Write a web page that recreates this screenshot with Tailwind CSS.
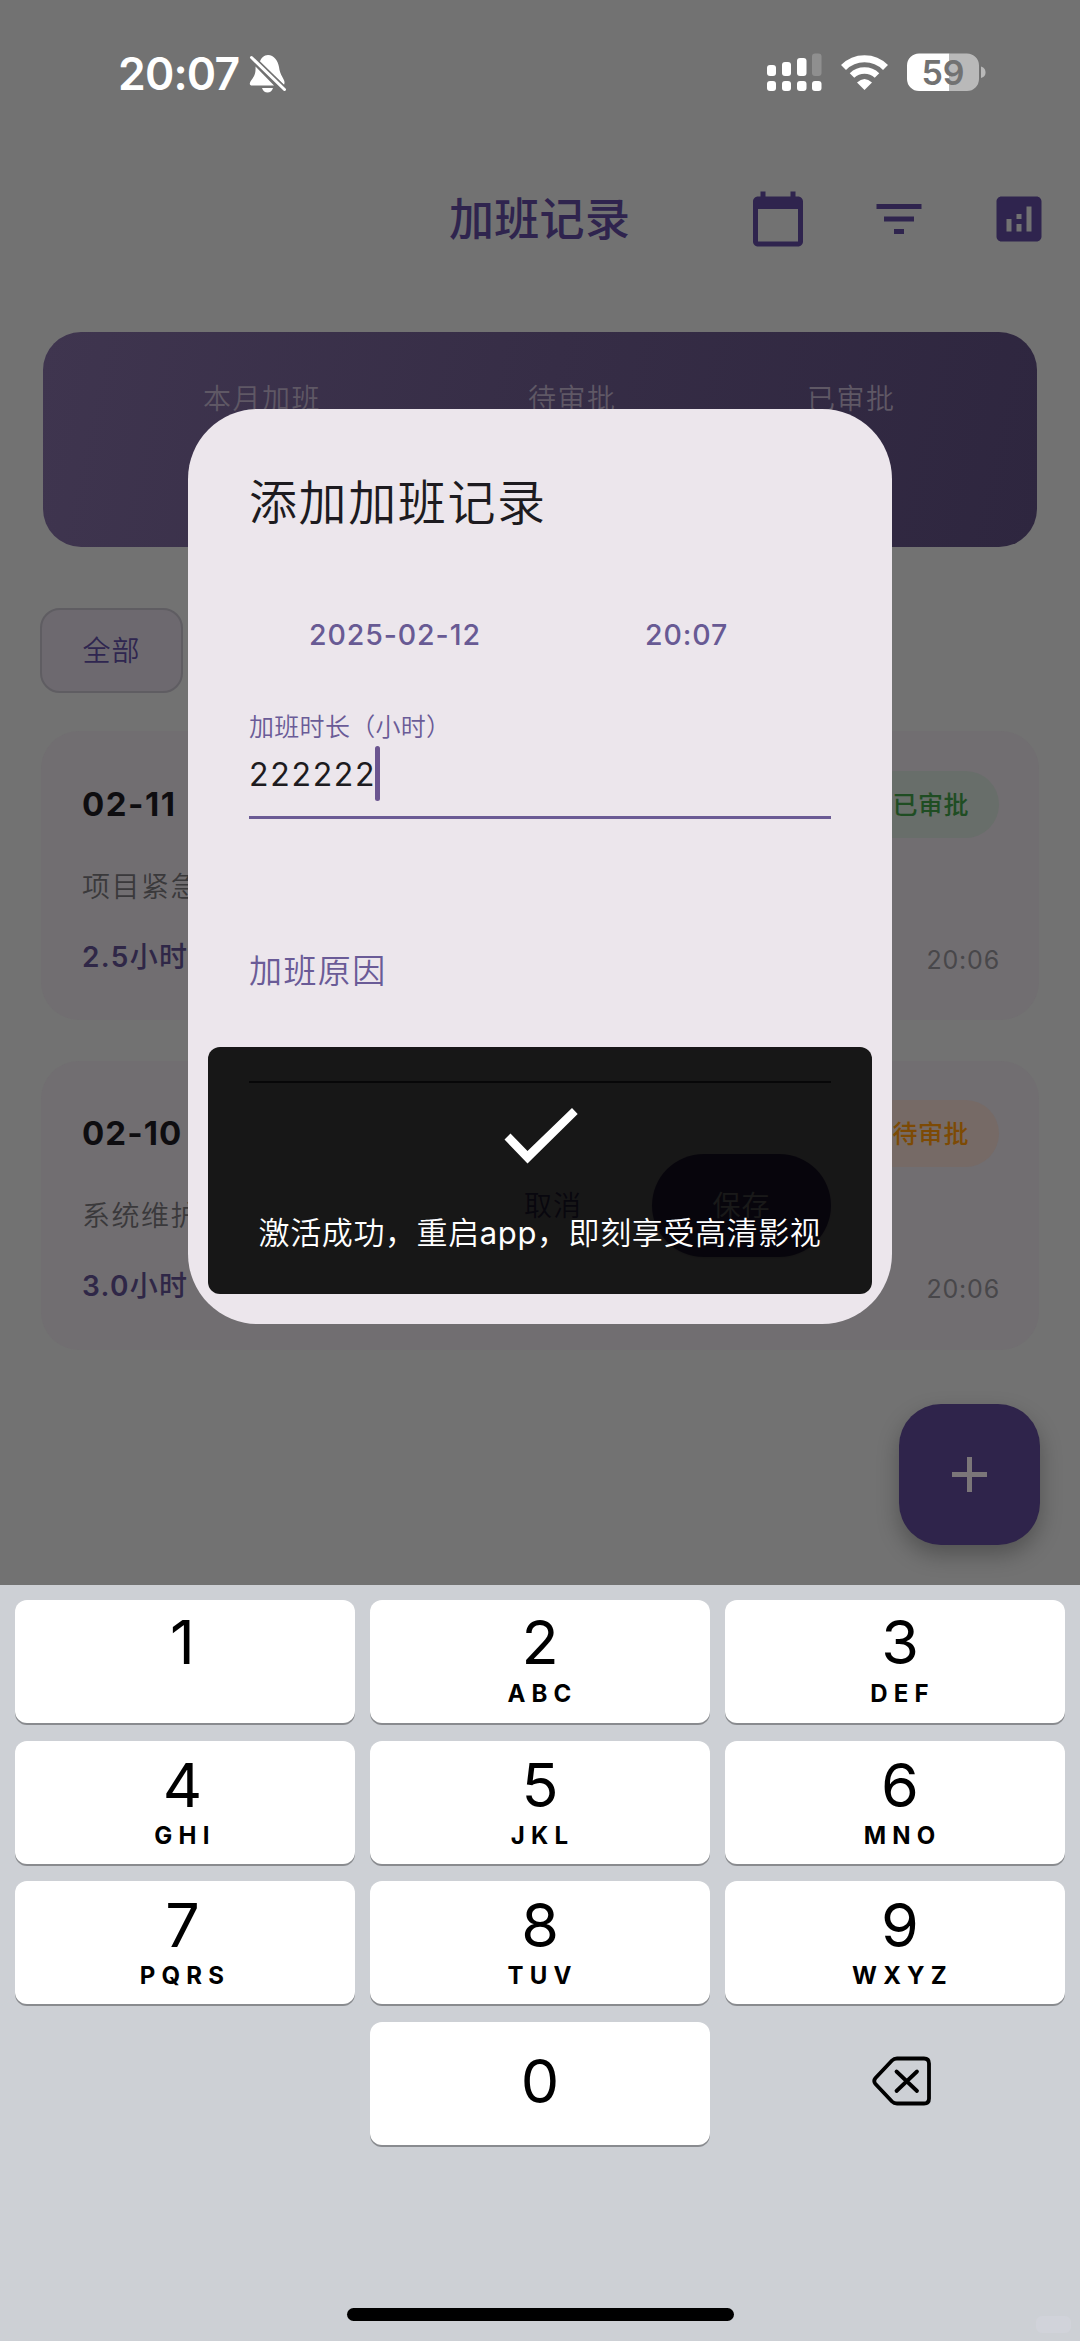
<!DOCTYPE html>
<html lang="zh-CN">
<head>
<meta charset="utf-8">
<title>加班记录</title>
<script src="https://cdn.jsdelivr.net/npm/@tailwindcss/browser@4"></script>
</head>
<body class="bg-[#727272]">
<div class="relative flex h-[2341px] w-[1080px] flex-col overflow-hidden bg-[#727272] font-[Inter,'Noto_Sans_CJK_SC',sans-serif] whitespace-nowrap">

  <!-- Status bar -->
  <div class="flex h-[146px] shrink-0 items-start pt-[50px] pr-[93px] pl-[118px]">
    <span class="w-[131px] text-[44.500px] leading-[48px] font-semibold tracking-[-0.800px] text-white">20:07</span>
    <svg class="mt-[4px] h-[40px] w-[38px]" viewBox="0 0 38 40" fill="#fff">
      <path d="M6.500 12.500C7 21 4.500 23 1.500 27.500C0 30 1 31.500 3 31.500H25zM11 7.500C12 4 15 1 19 1C25 1 29 7 30 13C31 22 36 25 35.500 29L35 31z"/>
      <path d="M13 34H24C23 37 21 38.500 18.500 38.500S14 37 13 34z"/>
      <path d="M2.500 3.500L35.500 35.500" stroke="#727272" stroke-width="6"/>
      <path d="M2.500 3.500L35.500 35.500" stroke="#fff" stroke-width="3" stroke-linecap="round"/>
    </svg>
    <svg class="mt-[3px] ml-auto h-[40px] w-[220px]" viewBox="0 0 220 40" fill="#fff">
      <rect x="0" y="12" width="9" height="11" rx="3"/><rect x="15" y="9" width="9" height="14" rx="3"/><rect x="30" y="5" width="9.500" height="18" rx="3"/><rect x="45" y="0.500" width="9.500" height="22.500" rx="3" fill="#8f8f8f"/>
      <rect x="0" y="28" width="9" height="10" rx="3"/><rect x="15" y="28" width="9" height="10" rx="3"/><rect x="30" y="28" width="9.500" height="10" rx="3"/><rect x="45" y="28" width="9.500" height="10" rx="3"/>
      <g fill="none" stroke="#fff">
        <path d="M76.500 14.500A29.500 29.500 0 0 1 118.500 14.500" stroke-width="7"/>
        <path d="M85 22.500A18 18 0 0 1 110 22.500" stroke-width="6.500"/>
      </g>
      <path d="M97.500 37L90 29.500Q97.500 22.500 105 29.500z"/>
      <path d="M152 0.500H182.500V38H152A12 12 0 0 1 140 26V12.500A12 12 0 0 1 152 0.500z"/>
      <path d="M182.500 0.500H200A12 12 0 0 1 212 12.500V26A12 12 0 0 1 200 38H182.500z" fill="#b9b9b9"/>
      <path d="M214 13.500C217.500 14.500 218.500 17 218.500 19.500S217.500 24 214 25z" fill="#b9b9b9"/>
      <text x="176" y="32" text-anchor="middle" font-family="Inter, sans-serif" font-size="34" font-weight="600" fill="#727272">59</text>
    </svg>
  </div>

  <!-- App bar -->
  <div class="flex h-[146px] shrink-0 items-center pr-[31px] pl-[449px] text-[#2f244e]">
    <h1 class="flex-1 pt-[2px] text-[45px] leading-[60px] font-medium tracking-[0.300px]">加班记录</h1>
    <div class="flex gap-[60.500px]">
      <svg class="size-[60px]" viewBox="0 0 24 24" fill="currentColor"><path d="M20 3h-1V1h-2v2H7V1H5v2H4c-1.100 0-2 .9-2 2v16c0 1.100.9 2 2 2h16c1.100 0 2-.9 2-2V5c0-1.100-.9-2-2-2zm0 18H4V8h16v13z"/></svg>
      <svg class="size-[60px]" viewBox="0 0 24 24" fill="currentColor"><path d="M10 18h4v-2h-4v2zM3 6v2h18V6H3zm3 7h12v-2H6v2z"/></svg>
      <svg class="size-[60px]" viewBox="0 0 24 24" fill="currentColor"><path d="M19 3H5c-1.100 0-2 .9-2 2v14c0 1.100.9 2 2 2h14c1.100 0 2-.9 2-2V5c0-1.100-.9-2-2-2zM9 17H7v-5h2v5zm4 0h-2v-3h2v3zm0-5h-2v-2h2v2zm4 5h-2V7h2v10z"/></svg>
    </div>
  </div>

  <!-- Summary -->
  <div class="mx-[43px] mt-[40px] flex h-[215px] shrink-0 rounded-[38px] bg-linear-[102deg] from-[#3f354f] via-[#362d46] to-[#2e263f] pt-[47px] pl-[160px] text-[28px] leading-[40px] font-[350] tracking-[1.500px] text-[#5f5865]">
    <span class="w-[325px]">本月加班</span><span class="w-[279px]">待审批</span><span>已审批</span>
  </div>

  <!-- Filter -->
  <div class="mt-[61px] ml-[40px] flex h-[85px] w-[143px] shrink-0 items-center justify-center rounded-[20px] border-2 border-[#5f5d62] bg-[#6d696f] text-[28px] font-[350] tracking-[1px] text-[#2f2650]">全部</div>

  <!-- Records -->
  <div class="mx-[41px] mt-[38px] flex h-[289px] shrink-0 flex-col rounded-[38px] bg-[#716e71] pr-[40px] pl-[41px]">
    <div class="mt-[40px] flex h-[67px] items-center justify-between">
      <span class="text-[33px] font-bold tracking-[1.500px] text-[#0e0d10]">02-11</span>
      <span class="flex h-[67px] items-center rounded-full bg-[#686e6a] pr-[30px] pl-[31px] pt-[3px] text-[25px] font-medium tracking-[0.500px] text-[#1f4d23]">已审批</span>
    </div>
    <p class="mt-[29px] text-[28px] leading-[40px] font-[350] tracking-[1.500px] text-[#3a393b]">项目紧急上线</p>
    <div class="mt-[30px] flex h-[40px] items-center justify-between">
      <span class="text-[28px] font-semibold tracking-[1.300px] text-[#2f2747]">2.5<span class="font-medium">小时</span></span>
      <span class="mr-[-1px] pt-[7px] text-[25px] font-normal tracking-[0.800px] text-[#48474a]">20:06</span>
    </div>
  </div>
  <div class="mx-[41px] mt-[41px] flex h-[289px] shrink-0 flex-col rounded-[38px] bg-[#716e71] pr-[40px] pl-[41px]">
    <div class="mt-[39px] flex h-[67px] items-center justify-between">
      <span class="text-[33px] font-bold tracking-[1.100px] text-[#0e0d10]">02-10</span>
      <span class="flex h-[67px] items-center rounded-full bg-[#766a66] pr-[30px] pl-[31px] pt-[3px] text-[25px] font-medium tracking-[0.500px] text-[#7d4a05]">待审批</span>
    </div>
    <p class="mt-[29px] text-[28px] leading-[40px] font-[350] tracking-[1.500px] text-[#3a393b]">系统维护</p>
    <div class="mt-[30px] flex h-[40px] items-center justify-between">
      <span class="text-[28px] font-semibold tracking-[1.300px] text-[#2f2747]">3.0<span class="font-medium">小时</span></span>
      <span class="mr-[-1px] pt-[7px] text-[25px] font-normal tracking-[0.800px] text-[#48474a]">20:06</span>
    </div>
  </div>

  <!-- Floating action button -->
  <div class="absolute top-[1404px] left-[899px] flex size-[141px] items-center justify-center rounded-[42px] bg-[#2f244b] shadow-[0_10px_22px_rgba(0,0,0,0.28)]">
    <svg class="size-[35px]" viewBox="0 0 35 35" fill="#7b7679"><path d="M15 0h5v15h15v5H20v15h-5V20H0v-5h15z"/></svg>
  </div>

  <!-- Number pad -->
  <div class="absolute inset-x-0 top-[1585px] bottom-0 flex flex-col items-center bg-[#cdd0d5] px-[15px] pt-[15px] text-black">
    <div id="pad" class="grid w-full grid-cols-3 gap-x-[15px] gap-y-[17.700px]"></div>
    <div class="mt-auto mb-[20px] h-[13px] w-[387px] rounded-full bg-black"></div>
    <div class="absolute right-[9px] bottom-[8px] h-[17px] w-[35px] rounded-[6px] bg-[#d1d3da]"></div>
  </div>

  <!-- Add-record dialog -->
  <div class="absolute top-[409px] left-[188px] flex h-[915px] w-[704px] flex-col rounded-[70px] bg-[#ece6ec] px-[61px] pt-[60px]">
    <h2 class="text-[48px] leading-[68px] font-[350] tracking-[1.600px] text-[#1d1b20]">添加加班记录</h2>
    <div class="mt-[78px] flex h-[40px] pl-[60px] text-[28.500px] leading-[40px] font-medium tracking-[0.900px] text-[#685a94]">
      <span class="w-[336px]">2025-02-12</span><span>20:07</span>
    </div>
    <p class="mt-[54px] h-[36px] text-[25px] leading-[36px] font-[350] tracking-[0.300px] text-[#6a5b97]">加班时长（小时）</p>
    <div class="flex h-[74px] items-start border-b-[3px] border-[#6b5b95]">
      <span class="pt-[8px] text-[32px] leading-[44px] tracking-[1.700px] text-[#1d1b20]">222222</span>
      <span class="mt-[1px] ml-[-1px] h-[55px] w-[5px] rounded-full bg-[#6b5590]"></span>
    </div>
    <p class="mt-[128px] h-[48px] text-[33px] leading-[48px] font-[350] tracking-[1.400px] text-[#6a5b97]">加班原因</p>
    <div class="mt-[86px] h-[2px] bg-[#49454f]"></div>
    <div class="mt-[71px] flex h-[103px] items-center justify-end">
      <span class="mr-[70px] text-[28px] font-[350] tracking-[1px] text-[#55458a]">取消</span>
      <span class="flex h-[103px] w-[179px] items-center justify-center rounded-full bg-[#4a3b7a] text-[28px] font-[350] tracking-[1px] text-white shadow-sm">保存</span>
    </div>
  </div>

  <!-- Toast -->
  <div class="absolute top-[1047px] left-[208px] flex h-[247px] w-[664px] flex-col items-center rounded-[12px] bg-black/90 pt-[61px] text-white">
    <svg class="ml-[2px] h-[56px] w-[74px]" viewBox="0 0 74 56" fill="#fff"><path d="M0.500 31.500L6.500 25.500L23.500 43L68 0L73.700 6L23.500 55.500z"/></svg>
    <p class="mt-[46px] text-[31px] leading-[46px] font-[350] tracking-[0.600px]">激活成功，重启<span class="font-normal">app</span>，即刻享受高清影视</p>
  </div>
</div>

<script>
  const keys = [['1', ''], ['2', 'ABC'], ['3', 'DEF'], ['4', 'GHI'], ['5', 'JKL'], ['6', 'MNO'], ['7', 'PQRS'], ['8', 'TUV'], ['9', 'WXYZ']];
  const cap = 'flex h-[123px] flex-col items-center rounded-[12px] bg-white shadow-[0_2px_0_#898b8f]';
  const digit = 'text-[61px] leading-[74px]';
  const side = ['pr-[5px]', 'pr-0', 'pl-[10px]'];
  document.getElementById('pad').innerHTML = keys.map(([n, t], i) =>
    `<div class="${cap} ${side[i % 3]}"><span class="${digit} ${i < 3 ? 'mt-[5px]' : 'mt-[7px]'}">${n}</span><span class="${i < 3 ? 'mt-[-1px]' : 'mt-[-2px]'} pl-[5px] text-[24px] leading-[32px] font-bold tracking-[6.200px]">${t}</span></div>`
  ).join('') +
    `<div></div><div class="${cap} justify-center"><span class="${digit} mt-[-5px]">0</span></div>
     <div class="flex h-[123px] items-center justify-center pl-[13px]">
       <svg class="mb-[5px] h-[50px] w-[60px]" viewBox="0 0 60 50" fill="none" stroke="#000" stroke-width="3.800" stroke-linejoin="round" stroke-linecap="round"><path d="M25 2.500H52Q57 2.500 57 7.500V42.500Q57 47.500 52 47.500H25Q22 47.500 20 45.500L3.500 28Q1 25 3.500 22L20 4.500Q22 2.500 25 2.500z"/><path d="M24.500 15.500L45 35M45 15.500L24.500 35"/></svg>
     </div>`;
</script>
</body>
</html>
